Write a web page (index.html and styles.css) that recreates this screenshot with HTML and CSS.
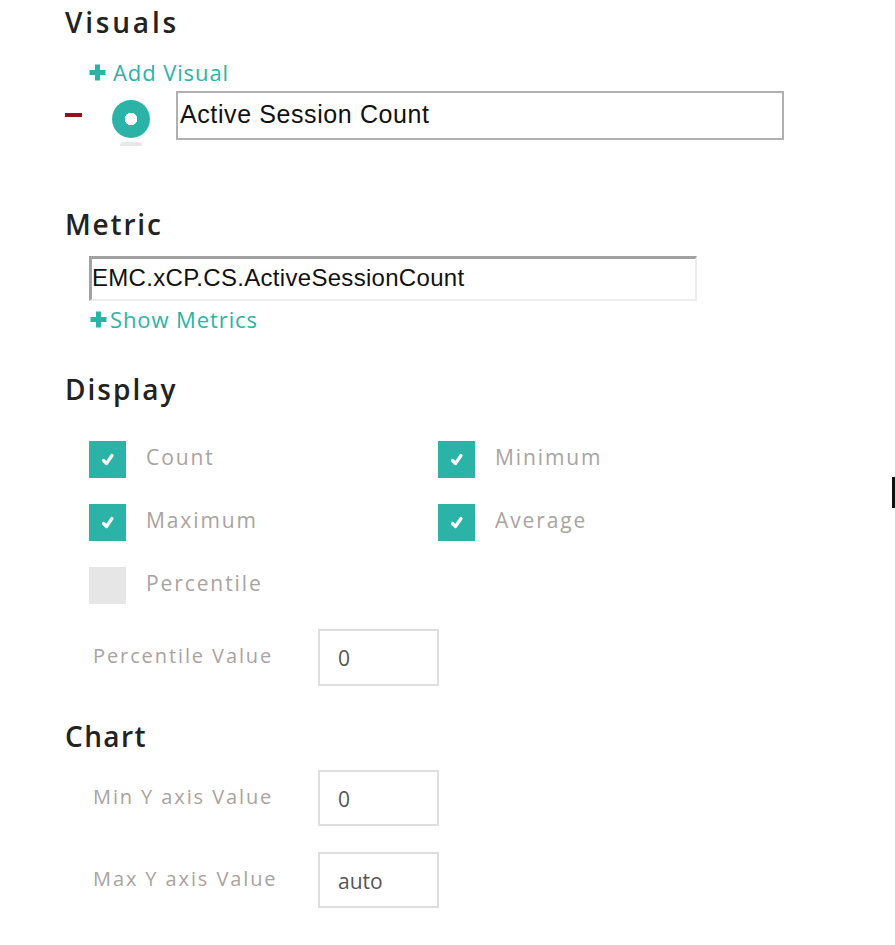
FILE: index.html
```html
<!DOCTYPE html>
<html>
<head>
<meta charset="utf-8">
<link rel="stylesheet" href="styles.css">
</head>
<body>
<div class="page">
  <h2 class="title title-visuals">Visuals</h2>
  <a class="link link-add"><svg class="plus" viewBox="0 0 19 19"><path d="M9.5 1.5v16M1.5 9.5h16"/></svg><span>Add Visual</span></a>
  <div class="visual-row">
    <span class="minus"></span>
    <span class="radio"></span>
    <div class="text-input visual-input">Active Session Count</div>
  </div>

  <h2 class="title title-metric">Metric</h2>
  <div class="text-input metric-input">EMC.xCP.CS.ActiveSessionCount</div>
  <a class="link link-show"><svg class="plus" viewBox="0 0 19 19"><path d="M9.5 1.5v16M1.5 9.5h16"/></svg><span>Show Metrics</span></a>

  <h2 class="title title-display">Display</h2>
  <div class="checks">
    <label class="check"><span class="box on"><svg viewBox="0 0 37 37"><path d="M14.5 19.5l3 3 5.5-8"/></svg></span><span class="check-label">Count</span></label>
    <label class="check"><span class="box on"><svg viewBox="0 0 37 37"><path d="M14.5 19.5l3 3 5.5-8"/></svg></span><span class="check-label">Minimum</span></label>
    <label class="check"><span class="box on"><svg viewBox="0 0 37 37"><path d="M14.5 19.5l3 3 5.5-8"/></svg></span><span class="check-label">Maximum</span></label>
    <label class="check"><span class="box on"><svg viewBox="0 0 37 37"><path d="M14.5 19.5l3 3 5.5-8"/></svg></span><span class="check-label">Average</span></label>
    <label class="check"><span class="box"></span><span class="check-label">Percentile</span></label>
  </div>
  <div class="field field-percentile">
    <span class="field-label">Percentile Value</span>
    <div class="num-input">0</div>
  </div>

  <h2 class="title title-chart">Chart</h2>
  <div class="field field-min">
    <span class="field-label">Min Y axis Value</span>
    <div class="num-input">0</div>
  </div>
  <div class="field field-max">
    <span class="field-label">Max Y axis Value</span>
    <div class="num-input">auto</div>
  </div>
</div>
<div class="edge-mark"></div>
</body>
</html>
```

FILE: styles.css
```css
html, body {
  margin: 0;
  padding: 0;
  background: #fff;
}
body {
  width: 895px;
  height: 945px;
  overflow: hidden;
  position: relative;
  font-family: "Open Sans", "Liberation Sans", sans-serif;
}
.page {
  padding: 5px 0 0 65px;
}
.title {
  margin: 0;
  font-family: "Open Sans", sans-serif;
  font-weight: 600;
  font-size: 28px;
  line-height: 34px;
  letter-spacing: 2px;
  color: #222;
}
.title-visuals { letter-spacing: 2.8px; }
.title-metric { margin-top: 67px; letter-spacing: 1.8px; }
.title-display { margin-top: 40px; letter-spacing: 2px; }
.title-chart { margin-top: 33px; letter-spacing: 1.4px; }

.link {
  display: flex;
  align-items: center;
  margin-left: 23px;
  font-size: 22px;
  line-height: 26px;
  color: #2bb3a8;
  cursor: pointer;
}
.link-add { margin-top: 20px; gap: 6px; letter-spacing: 0.9px; }
.link-show { margin-top: 5px; margin-left: 24px; gap: 2px; letter-spacing: 0.9px; }
.plus {
  width: 19px;
  height: 19px;
  flex: none;
}
.plus path {
  stroke: #2bb3a8;
  stroke-width: 5;
  fill: none;
}

.visual-row {
  display: flex;
  align-items: center;
  margin-top: 6px;
  height: 49px;
}
.minus {
  width: 17px;
  height: 4px;
  background: #8e1515;
  margin-top: -2px;
}
.radio {
  position: relative;
  width: 38px;
  height: 38px;
  border-radius: 50%;
  background: radial-gradient(circle, #fff 0 6px, #2bb3a8 6.5px);
  margin-left: 30px;
  margin-top: 7px;
}
.radio::after {
  content: "";
  position: absolute;
  left: 8px;
  top: 42px;
  width: 22px;
  height: 4px;
  border-radius: 11px 11px 0 0;
  background: #e8e8e8;
}
.text-input {
  box-sizing: border-box;
  font-family: "Liberation Sans", Arial, sans-serif;
  color: #111;
  background: #fff;
}
.visual-input {
  margin-left: 26px;
  width: 608px;
  height: 49px;
  border: 2px solid #b0b0b0;
  padding: 0 0 0 2px;
  font-size: 25px;
  line-height: 43px;
  letter-spacing: 0.6px;
}
.metric-input {
  margin: 15px 0 0 24px;
  width: 608px;
  height: 45px;
  border: 2px solid #ececec;
  border-top: 3px solid #a2a2a2;
  border-left: 3px solid #a2a2a2;
  padding: 0 0 0 0;
  font-size: 24px;
  line-height: 38px;
  letter-spacing: 0.3px;
}

.checks {
  display: grid;
  grid-template-columns: 349px 349px;
  row-gap: 26px;
  margin: 35px 0 0 24px;
}
.check {
  display: flex;
  align-items: center;
  height: 37px;
}
.box {
  width: 37px;
  height: 37px;
  flex: none;
  background: #e6e6e6;
}
.box.on { background: #2bb3a8; }
.box svg {
  width: 37px;
  height: 37px;
  display: block;
}
.box svg path {
  stroke: #fff;
  stroke-width: 3.2;
  stroke-linecap: round;
  stroke-linejoin: round;
  fill: none;
}
.check-label {
  margin-left: 20px;
  margin-top: -6px;
  font-size: 21px;
  letter-spacing: 1.9px;
  color: #a9a3a1;
}

.field {
  display: flex;
  align-items: center;
  margin-left: 28px;
}
.field-percentile { margin-top: 25px; }
.field-min { margin-top: 17px; }
.field-max { margin-top: 26px; }
.field-label {
  width: 225px;
  flex: none;
  font-size: 20px;
  letter-spacing: 1.9px;
  color: #a9a3a1;
  margin-top: -4px;
}
.num-input {
  box-sizing: border-box;
  width: 121px;
  height: 57px;
  border: 2px solid #dedede;
  padding-left: 18px;
  font-size: 21px;
  line-height: 55px;
  color: #555;
}
.field-min .num-input,
.field-max .num-input { height: 56px; line-height: 54px; }

.edge-mark {
  position: absolute;
  right: 0;
  top: 477px;
  width: 3px;
  height: 31px;
  background: #111;
}
```
